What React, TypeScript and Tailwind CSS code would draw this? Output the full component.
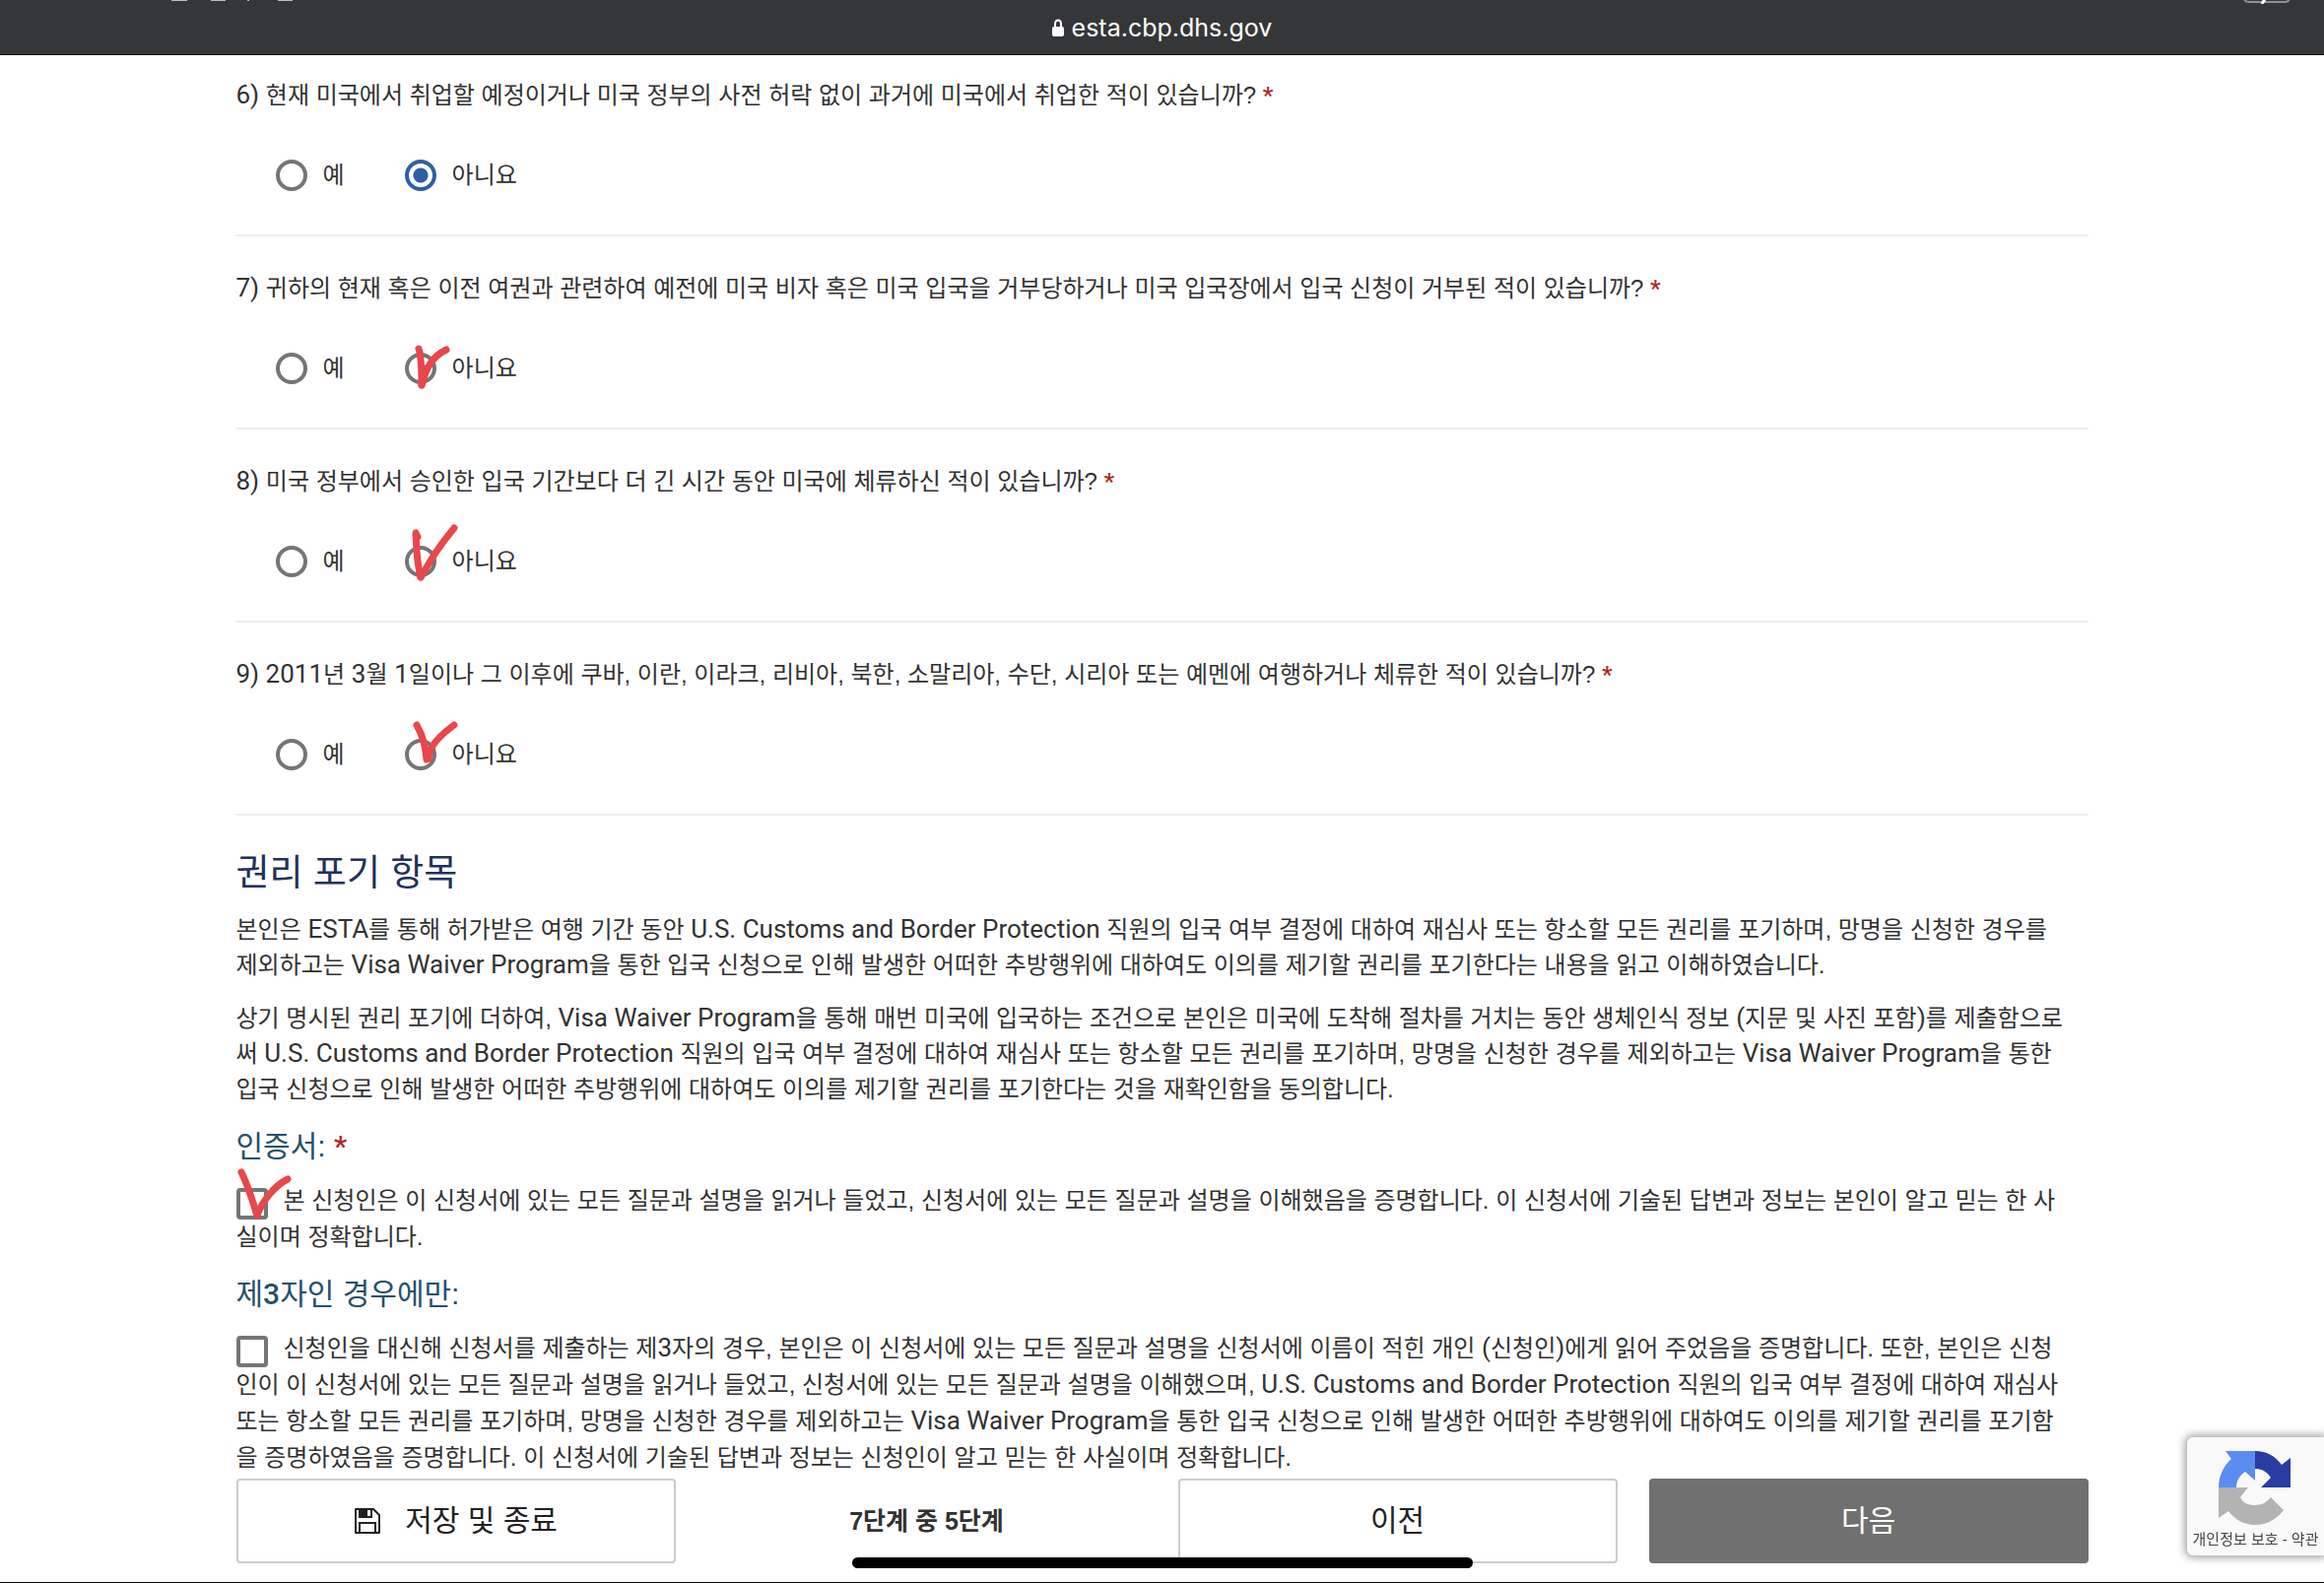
import React from 'react';

type Mark = {
  box: string;
  viewBox: string;
  paths: string[];
};

const questions: { id: number; text: string; checked?: boolean; mark?: Mark }[] = [
  {
    id: 6,
    text: '현재 미국에서 취업할 예정이거나 미국 정부의 사전 허락 없이 과거에 미국에서 취업한 적이 있습니까?',
    checked: true,
  },
  {
    id: 7,
    text: '귀하의 현재 혹은 이전 여권과 관련하여 예전에 미국 비자 혹은 미국 입국을 거부당하거나 미국 입국장에서 입국 신청이 거부된 적이 있습니까?',
    mark: {
      box: 'absolute -top-2 left-0 w-12 h-12',
      viewBox: '0 0 48 48',
      paths: ['M14 4 C17 12 17 28 17 41', 'M17 41 C22 22 28 12 42 5', 'M18 38 L21 24'],
    },
  },
  {
    id: 8,
    text: '미국 정부에서 승인한 입국 기간보다 더 긴 시간 동안 미국에 체류하신 적이 있습니까?',
    mark: {
      box: 'absolute -top-6 left-0 w-14 h-16',
      viewBox: '0 0 56 64',
      paths: ['M13 15 L11 11 C12 30 12 42 16 56', 'M16 56 C26 39 34 25 50 6'],
    },
  },
  {
    id: 9,
    text: '2011년 3월 1일이나 그 이후에 쿠바, 이란, 이라크, 리비아, 북한, 소말리아, 수단, 시리아 또는 예멘에 여행하거나 체류한 적이 있습니까?',
    mark: {
      box: 'absolute -top-5 left-0 w-14 h-12',
      viewBox: '0 0 56 48',
      paths: ['M12 6 C20 20 21 32 22 41', 'M24 40 C24 30 32 19 50 6'],
    },
  },
];

// Latin words and numbers are set in Roboto, slightly larger than the Hangul around them
function Mixed({ text }: { text: string }) {
  return (
    <>
      {text.split(/([A-Za-z0-9()][A-Za-z0-9.() ]*[A-Za-z0-9()]|[A-Za-z0-9()])/).map((part, i) =>
        i % 2 ? (
          <span key={i} className="text-[26px] leading-none font-[Roboto,sans-serif]">{part}</span>
        ) : (
          part
        )
      )}
    </>
  );
}

function Lines({ lines }: { lines: string[] }) {
  return (
    <>
      {lines.map((line, i) => (
        <React.Fragment key={line}>
          {i > 0 && <br />}
          <Mixed text={line} />
        </React.Fragment>
      ))}
    </>
  );
}

function PenMark({ box, viewBox, paths }: Mark) {
  return (
    <svg className={`${box} pointer-events-none`} viewBox={viewBox} fill="none" stroke="#e8474c" strokeWidth="7" strokeLinecap="round" strokeLinejoin="round" aria-hidden="true">
      {paths.map((d) => (
        <path key={d} d={d} />
      ))}
    </svg>
  );
}

function Choice({ name, label, checked, mark }: { name: string; label: string; checked?: boolean; mark?: Mark }) {
  return (
    <label className="relative flex items-center gap-4 h-8">
      <input
        type="radio"
        name={name}
        defaultChecked={checked}
        className="appearance-none w-8 h-8 rounded-full border-4 border-[#757575] checked:border-[#2e5fa3] checked:bg-[radial-gradient(circle,#2e5fa3_7px,#ffffff_8px)]"
      />
      <span>{label}</span>
      {mark && <PenMark {...mark} />}
    </label>
  );
}

function Required() {
  return <span className="font-[Roboto,sans-serif] font-medium text-[#b3281e]">*</span>;
}

const checkboxClass = 'appearance-none float-left w-8 h-8 mt-[6px] -mb-1 mr-4 rounded-sm border-4 border-[#757575] bg-white checked:bg-[#2e5fa3]';
const outlineButton = 'flex items-center justify-center gap-6 h-[86px] rounded-sm border-2 border-[#cccccc] bg-white text-[30px] text-[#212121]';

export default function App() {
  return (
    <div className="bg-white text-2xl leading-9 text-[#323232] font-['Liberation_Sans','Noto_Sans_CJK_KR',sans-serif]" lang="ko">
      <header className="relative h-14 flex items-center justify-center gap-2 overflow-hidden bg-[#353638] border-b border-black text-white">
        <svg className="w-3 h-[18px]" viewBox="0 0 12 18" aria-hidden="true">
          <path d="M3 9V5a3 3.5 0 0 1 6 0v4" fill="none" stroke="currentColor" strokeWidth="2" />
          <rect y="8" width="12" height="10" rx="2" fill="currentColor" />
        </svg>
        <span className="text-[25px] font-[Inter,sans-serif]">esta.cbp.dhs.gov</span>
        {/* lower edge of the status bar */}
        <svg className="absolute top-0 left-[174px] w-[124px] h-1" viewBox="0 0 124 4" fill="#b9bbbd" aria-hidden="true">
          <path d="M0 0h16v1H0zM40 0h15v1H40zM77 0h2v1h-2zM108 0h15v1h-15z" />
        </svg>
        <svg className="absolute top-0 right-[34px] w-[48px] h-1" viewBox="0 0 48 4" fill="none" aria-hidden="true">
          <path d="M1 -1q1 3 5 3h36q4 0 5-3" stroke="#8f9092" strokeWidth="2" />
          <path d="M22 -1l-3 5" stroke="#ffffff" strokeWidth="3" />
        </svg>
      </header>

      <main className="max-w-[1880px] mx-auto">
        <div className="-mt-3">
          {questions.map((q) => (
            <fieldset key={q.id} className="pt-[35px] pb-11 border-b-2 border-[#ededed]">
              <legend className="contents">
                <span className="block">
                  <Mixed text={`${q.id}) ${q.text}`} /> <Required />
                </span>
              </legend>
              <div className="mt-[47px] flex gap-[61px] pl-10">
                <Choice name={`q${q.id}`} label="예" />
                <Choice name={`q${q.id}`} label="아니요" checked={q.checked} mark={q.mark} />
              </div>
            </fieldset>
          ))}
        </div>

        <section>
          <h2 className="mt-[34px] text-[37px] leading-[50px] font-normal text-[#20315a]">권리 포기 항목</h2>
          <p className="mt-[14px]">
            <Lines
              lines={[
                '본인은 ESTA를 통해 허가받은 여행 기간 동안 U.S. Customs and Border Protection 직원의 입국 여부 결정에 대하여 재심사 또는 항소할 모든 권리를 포기하며, 망명을 신청한 경우를',
                '제외하고는 Visa Waiver Program을 통한 입국 신청으로 인해 발생한 어떠한 추방행위에 대하여도 이의를 제기할 권리를 포기한다는 내용을 읽고 이해하였습니다.',
              ]}
            />
          </p>
          <p className="mt-[18px]">
            <Lines
              lines={[
                '상기 명시된 권리 포기에 더하여, Visa Waiver Program을 통해 매번 미국에 입국하는 조건으로 본인은 미국에 도착해 절차를 거치는 동안 생체인식 정보 (지문 및 사진 포함)를 제출함으로',
                '써 U.S. Customs and Border Protection 직원의 입국 여부 결정에 대하여 재심사 또는 항소할 모든 권리를 포기하며, 망명을 신청한 경우를 제외하고는 Visa Waiver Program을 통한',
                '입국 신청으로 인해 발생한 어떠한 추방행위에 대하여도 이의를 제기할 권리를 포기한다는 것을 재확인함을 동의합니다.',
              ]}
            />
          </p>
        </section>

        <section>
          <h3 className="mt-5 text-[30px] leading-10 font-normal text-[#25506b]">
            인증서: <Required />
          </h3>
          <div className="relative mt-4 leading-[37px]">
            <input id="certify" type="checkbox" className={checkboxClass} />
            <label htmlFor="certify">
              <Lines
                lines={[
                  '본 신청인은 이 신청서에 있는 모든 질문과 설명을 읽거나 들었고, 신청서에 있는 모든 질문과 설명을 이해했음을 증명합니다. 이 신청서에 기술된 답변과 정보는 본인이 알고 믿는 한 사',
                  '실이며 정확합니다.',
                ]}
              />
            </label>
            <PenMark box="absolute -top-4 left-0 w-14 h-14" viewBox="0 0 56 56" paths={['M5 6 C12 20 16 34 21 50', 'M21 50 C26 36 38 20 52 13']} />
          </div>
        </section>

        <section>
          <h3 className="mt-5 text-[30px] leading-10 font-normal text-[#25506b]">
            제<span className="font-[Roboto,sans-serif] font-medium">3</span>자인 경우에만:
          </h3>
          <div className="mt-4 leading-[37px]">
            <input id="third-party" type="checkbox" className={checkboxClass} />
            <label htmlFor="third-party">
              <Lines
                lines={[
                  '신청인을 대신해 신청서를 제출하는 제3자의 경우, 본인은 이 신청서에 있는 모든 질문과 설명을 신청서에 이름이 적힌 개인 (신청인)에게 읽어 주었음을 증명합니다. 또한, 본인은 신청',
                  '인이 이 신청서에 있는 모든 질문과 설명을 읽거나 들었고, 신청서에 있는 모든 질문과 설명을 이해했으며, U.S. Customs and Border Protection 직원의 입국 여부 결정에 대하여 재심사',
                  '또는 항소할 모든 권리를 포기하며, 망명을 신청한 경우를 제외하고는 Visa Waiver Program을 통한 입국 신청으로 인해 발생한 어떠한 추방행위에 대하여도 이의를 제기할 권리를 포기함',
                  '을 증명하였음을 증명합니다. 이 신청서에 기술된 답변과 정보는 신청인이 알고 믿는 한 사실이며 정확합니다.',
                ]}
              />
            </label>
          </div>
        </section>

        <nav className="grid grid-cols-4 gap-8 items-center mt-[3px]">
          <button type="button" className={outlineButton}>
            <svg className="w-7 h-7" viewBox="0 0 28 28" fill="none" stroke="currentColor" strokeWidth="2" aria-hidden="true">
              <path d="M2 2h18l6 6v18H2z" strokeLinejoin="round" />
              <path d="M6 2v8h12V2M6 26V16h16v10" />
              <path d="M7 3h6v7H7z" fill="currentColor" />
            </svg>
            저장 및 종료
          </button>
          <div className="text-center font-bold text-[25px]">7단계 중 5단계</div>
          <button type="button" className={outlineButton}>이전</button>
          <button type="button" className="h-[86px] rounded-sm bg-[#707070] text-[30px] text-white">다음</button>
        </nav>
      </main>

      <footer className="h-5 border-b border-black"></footer>

      {/* reCAPTCHA badge */}
      <aside className="fixed bottom-7 right-0 w-[139px] h-[120px] rounded-l-md bg-[#f9f9f9] shadow-[0_0_8px_2px_#9a9a9a] flex flex-col items-center">
        <svg className="w-[76px] h-[76px] mt-[14px]" viewBox="0 0 76 76" aria-hidden="true">
          <path d="M37 0H7l6 8C5 15 0 26 0 37h18c0-6 3-12 9-16l10 9z" fill="#5a8df0" />
          <path d="M37 0c12 0 20 5 27 14l9-7v30H43l10-10c-3-5-8-9-16-9z" fill="#283ca3" />
          <path d="M0 37h30l-8 10c3 6 8 8 15 8s12-3 16-8l13 13c-7 9-17 15-29 15-11 0-20-5-27-14l-10 7z" fill="#b3b3b3" />
        </svg>
        <a href="#privacy" className="mt-1 text-[15px] leading-5 whitespace-nowrap text-[#444444]">개인정보 보호 - 약관</a>
      </aside>

      {/* home indicator */}
      <div className="fixed bottom-[15px] left-1/2 -translate-x-1/2 w-[630px] h-[11px] rounded-full bg-black"></div>
    </div>
  );
}
